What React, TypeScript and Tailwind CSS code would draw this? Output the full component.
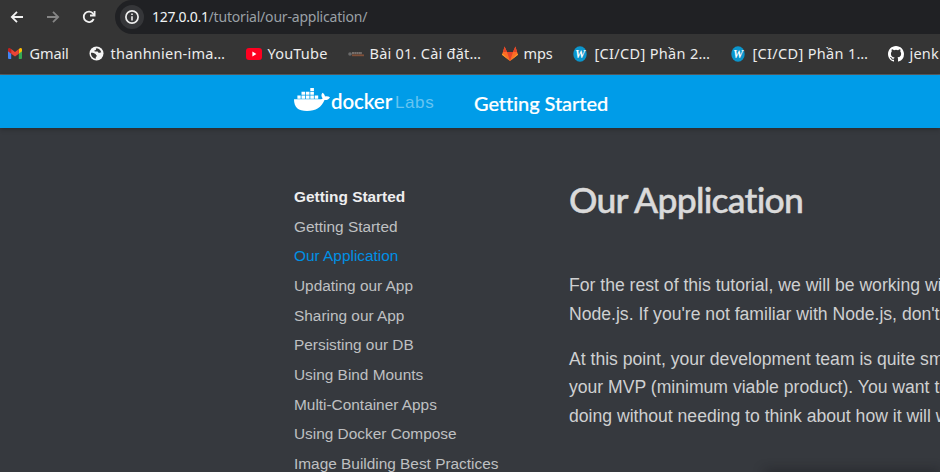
import type { ReactNode } from "react";

function GmailIcon() {
  return (
    <svg width="14" height="11" viewBox="0 0 14 11">
      <path d="M0 1.5 3.2 4v7H1a1 1 0 0 1-1-1Z" fill="#4285f4" />
      <path d="M14 1.5 10.8 4v7H13a1 1 0 0 0 1-1Z" fill="#34a853" />
      <path d="M10.8 1 12 .3c1-.7 2 .1 2 1.2v1.7l-3.2 2.5Z" fill="#fbbc04" />
      <path d="M3.2 1 2 .3C1 -.4 0 .4 0 1.5v1.7l3.2 2.5Z" fill="#c5221f" />
      <path d="M3.2 1 7 3.9 10.8 1v4.7L7 8.6 3.2 5.7Z" fill="#ea4335" />
    </svg>
  );
}

function GlobeIcon() {
  return (
    <svg width="15" height="15" viewBox="0 0 15 15">
      <circle cx="7.5" cy="7.5" r="7" fill="#f5f5f5" />
      <path d="M7.8 2.2c-1 .1-1.2.9-.6 1.3-.3.8-1.6.5-1.8 1.3 0 .8.9.8 1 .8h2c.8.1.7 1.1 1.4 1.3.9.1 1-.6 2.4-.3C12 4.300 10.200 2.600 7.800 2.200ZM2 7c.2-.5 3.200.200 4.600 1 .6.600.200 1.300 1.200 1.600.500.400 0 1.200-.9 1.200l-.2 1.900C4 12.300 1.700 9.700 2 7Z" fill="#353535" />
    </svg>
  );
}

function YouTubeIcon() {
  return (
    <svg width="16" height="12" viewBox="0 0 16 12">
      <rect width="16" height="12" rx="3" fill="#ff0020" />
      <path d="m6.400 3.600 4 2.400-4 2.400Z" fill="#fff" />
    </svg>
  );
}

function LessonIcon() {
  return (
    <svg width="16" height="6" viewBox="0 0 16 6">
      <circle cx="2" cy="3" r="1.800" fill="#6a6a6a" />
      <path d="M4 2.200h10" stroke="#77706c" strokeWidth="2.200" strokeDasharray="2 .3" />
      <path d="M4 4.300h12" stroke="#805039" strokeWidth="1.800" />
    </svg>
  );
}

function GitLabIcon() {
  return (
    <svg width="16" height="15" viewBox="0 0 16 15">
      <path d="M0 8.800 2.600.500 5 6h6l2.400-5.500L16 8.800 8 15Z" fill="#fc6d26" />
      <path d="M2.600.500 5 6H1Zm10.800 0L11 6h4Z" fill="#e24329" />
      <path d="M5 6h6l-3 9Z" fill="#e24329" />
      <path d="m.4 7.500 7.600 7.500-8-6.200Zm15.200 0L8 15l8-6.200Z" fill="#fca326" />
    </svg>
  );
}

function WordIcon() {
  return (
    <svg width="14" height="16" viewBox="0 0 14 16">
      <ellipse cx="7" cy="8" rx="6.700" ry="7.800" fill="#0b95cc" />
      <text x="7" y="12" textAnchor="middle" fill="#fff" fontSize="11.500" fontWeight="700" className="font-['Liberation_Serif',serif] italic">W</text>
    </svg>
  );
}

function GitHubIcon() {
  return (
    <svg width="16" height="16" viewBox="0 0 16 16" fill="#fff">
      <path d="M8 0C3.580 0 0 3.580 0 8c0 3.540 2.290 6.530 5.470 7.590.4.070.55-.17.55-.38 0-.19-.01-.82-.01-1.490-2.010.37-2.530-.49-2.690-.94-.09-.23-.48-.94-.82-1.130-.28-.15-.68-.52-.01-.53.63-.01 1.080.58 1.230.82.72 1.210 1.870.87 2.330.66.07-.52.28-.87.51-1.070-1.780-.2-3.640-.89-3.640-3.950 0-.87.31-1.590.82-2.150-.08-.2-.36-1.020.08-2.120 0 0 .67-.21 2.200.82a7.600 7.600 0 0 1 4 0c1.530-1.040 2.200-.82 2.200-.82.44 1.100.16 1.920.08 2.120.51.56.82 1.270.82 2.150 0 3.070-1.870 3.750-3.650 3.950.29.25.54.73.54 1.480 0 1.070-.01 1.930-.01 2.200 0 .21.15.46.55.38A8 8 0 0 0 16 8c0-4.420-3.580-8-8-8Z" />
    </svg>
  );
}

function DockerWhale() {
  return (
    <svg width="36" height="24" viewBox="0 0 36 24" fill="#fff">
      <path d="M0 11.200h25.500c1.300 0 2.400-.2 3.200-.8-1.600-1.700-1.700-4.200-.2-5.700 1.600 1 2.300 2.200 2.500 3.800 1.800-.4 3.600-.1 5 .7-1 2-2.900 3-5.500 2.900C27.600 19.500 21.800 23 13 23 4.300 23 0 19.200 0 11.200Z" />
      <path d="M3.400 7.500h3.300v3.200H3.400zm4.100 0h3.600v3.200H7.500zm4.400 0h3.600v3.200h-3.600zm4.400 0h3.600v3.200h-3.600zm4.400 0h3.500v3.200h-3.500zM7.500 3.800h3.600v3H7.500zm4.400 0h3.600v3h-3.600zm4.400 0h3.600v3h-3.600zM16.300 0h3.600v3h-3.600z" />
    </svg>
  );
}

function Bookmark({ icon, label, slot, text }: { icon: ReactNode; label: string; slot: string; text: string }) {
  return (
    <div className={`flex h-full shrink-0 items-center ${slot}`}>
      <span className="flex w-[22px] shrink-0 items-center">{icon}</span>
      <span className={`whitespace-nowrap ${text}`}>{label}</span>
    </div>
  );
}

function BrowserChrome() {
  return (
    <div className="h-[75px] shrink-0 border-b border-[#5b5f62] bg-[#353535] font-['Noto_Sans','Open_Sans',sans-serif]">
      <div className="flex h-[34px] items-center">
        <svg className="ml-[10px] shrink-0" width="14" height="14" viewBox="0 0 14 14" fill="none" stroke="#f2f2f2" strokeWidth="1.800">
          <path d="M13 7H2M7 1.800 1.800 7 7 12.200" />
        </svg>
        <svg className="ml-[22px] shrink-0" width="14" height="14" viewBox="0 0 14 14" fill="none" stroke="#858585" strokeWidth="1.800">
          <path d="M1 7h11M7 1.800 12.200 7 7 12.200" />
        </svg>
        <svg className="ml-[22px] shrink-0" width="14" height="14" viewBox="0 0 14 14" fill="none" stroke="#f2f2f2" strokeWidth="1.800">
          <path d="M11.700 9A5.200 5.200 0 1 1 11.200 3.800L12.500 5" />
          <path d="M12.600 1v4.500H8" />
        </svg>
        <div className="ml-[19px] flex h-[34px] flex-1 items-center rounded-l-full bg-[#202124] pl-[5px]">
          <span className="flex size-6 items-center justify-center rounded-full bg-[#353639]">
            <svg width="14" height="14" viewBox="0 0 14 14" fill="none" stroke="#eee">
              <circle cx="7" cy="7" r="6.100" strokeWidth="1.700" />
              <path d="M7 6.200v4.200M7 3.500v1.500" strokeWidth="1.600" />
            </svg>
          </span>
          <p className="ml-2 whitespace-nowrap pb-0.5 text-[14px] tracking-[-0.200px] text-[#9aa0a6]">
            <span className="tracking-[-0.300px] text-[#f1f3f4]">127.0.0.1</span>/tutorial/our-application/
          </p>
        </div>
      </div>
      <div className="flex h-[39px] items-center overflow-hidden pl-[7.500px] text-[14.500px] text-[#ececec]">
        <Bookmark icon={<GmailIcon />} label="Gmail" slot="w-[81px]" text="tracking-[-0.100px]" />
        <Bookmark icon={<GlobeIcon />} label="thanhnien-ima…" slot="w-[157px]" text="tracking-[0.220px]" />
        <Bookmark icon={<YouTubeIcon />} label="YouTube" slot="w-[102px]" text="tracking-[0.200px]" />
        <Bookmark icon={<LessonIcon />} label="Bài 01. Cài đặt…" slot="w-[154px]" text="tracking-[0.240px]" />
        <Bookmark icon={<GitLabIcon />} label="mps" slot="w-[71px]" text="tracking-[-0.100px]" />
        <Bookmark icon={<WordIcon />} label="[CI/CD] Phần 2…" slot="w-[158px]" text="tracking-[0.330px]" />
        <Bookmark icon={<WordIcon />} label="[CI/CD] Phần 1…" slot="w-[157px]" text="tracking-[0.330px]" />
        <Bookmark icon={<GitHubIcon />} label="jenk" slot="w-[52px]" text="tracking-[0.200px]" />
      </div>
    </div>
  );
}

const chapters = [
  "Getting Started",
  "Our Application",
  "Updating our App",
  "Sharing our App",
  "Persisting our DB",
  "Using Bind Mounts",
  "Multi-Container Apps",
  "Using Docker Compose",
  "Image Building Best Practices",
];

export default function App() {
  return (
    <div className="flex h-[472px] w-[940px] flex-col overflow-hidden bg-[#36393e] font-['Liberation_Sans',Arial,sans-serif]">
      <BrowserChrome />
      <header className="z-10 flex h-[53px] shrink-0 items-center bg-[#009ce8] pb-1 pl-[294px] shadow-[0_1px_5px_rgba(0,0,0,0.300)]">
        <div className="flex h-6 w-[180px] items-center">
          <DockerWhale />
          <span className="ml-px w-[64px] whitespace-nowrap pt-0.5 font-['Lato',sans-serif] text-[20.500px] font-semibold leading-6 tracking-[-0.100px] text-white">docker</span>
          <span className="pt-1.5 text-[17px] leading-5 tracking-[0.600px] text-[#66c4f1]">Labs</span>
        </div>
        <span className="whitespace-nowrap pt-1.5 font-['Lato',sans-serif] text-[20px] font-medium tracking-[-0.060px] text-white [-webkit-text-stroke:0.200px_white] [font-variant-ligatures:none]">Getting Started</span>
      </header>
      <main className="flex min-h-0 flex-1 pl-[294px]">
        <nav className="w-[275px] shrink-0 pt-[54px] text-[15.400px] leading-[29.650px] text-[#bfc0c2]">
          <p className="font-bold text-[#eeeeef]">Getting Started</p>
          <ul>
            {chapters.map((chapter) => (
              <li key={chapter} className={chapter === "Our Application" ? "whitespace-nowrap text-[#0090e5]" : "whitespace-nowrap"}>
                {chapter}
              </li>
            ))}
          </ul>
        </nav>
        <article className="flex min-w-0 flex-1 flex-col whitespace-nowrap text-[17.600px] leading-[28.600px] text-[#cfd0d1]">
          <h1 className="mt-[49px] h-[46px] font-['Lato',sans-serif] text-[35.500px] font-medium leading-[46px] tracking-[-0.750px] text-[#dadada] [-webkit-text-stroke:0.500px_#dadada] [font-variant-ligatures:none]">Our Application</h1>
          <p className="mt-12">
            For the rest of this tutorial, we will be working with a simple
            <br />
            Node.js. If you're not familiar with Node.js, don't worry!
          </p>
          <p className="mt-[16.600px]">
            At this point, your development team is quite small and
            <br />
            your MVP (minimum viable product). You want to show
            <br />
            doing without needing to think about how it will work
          </p>
          <div className="ml-[196px] mt-auto h-1 shrink-0 translate-y-1 shadow-[0_0_12px_rgba(20,20,25,0.900)]" />
        </article>
      </main>
    </div>
  );
}
